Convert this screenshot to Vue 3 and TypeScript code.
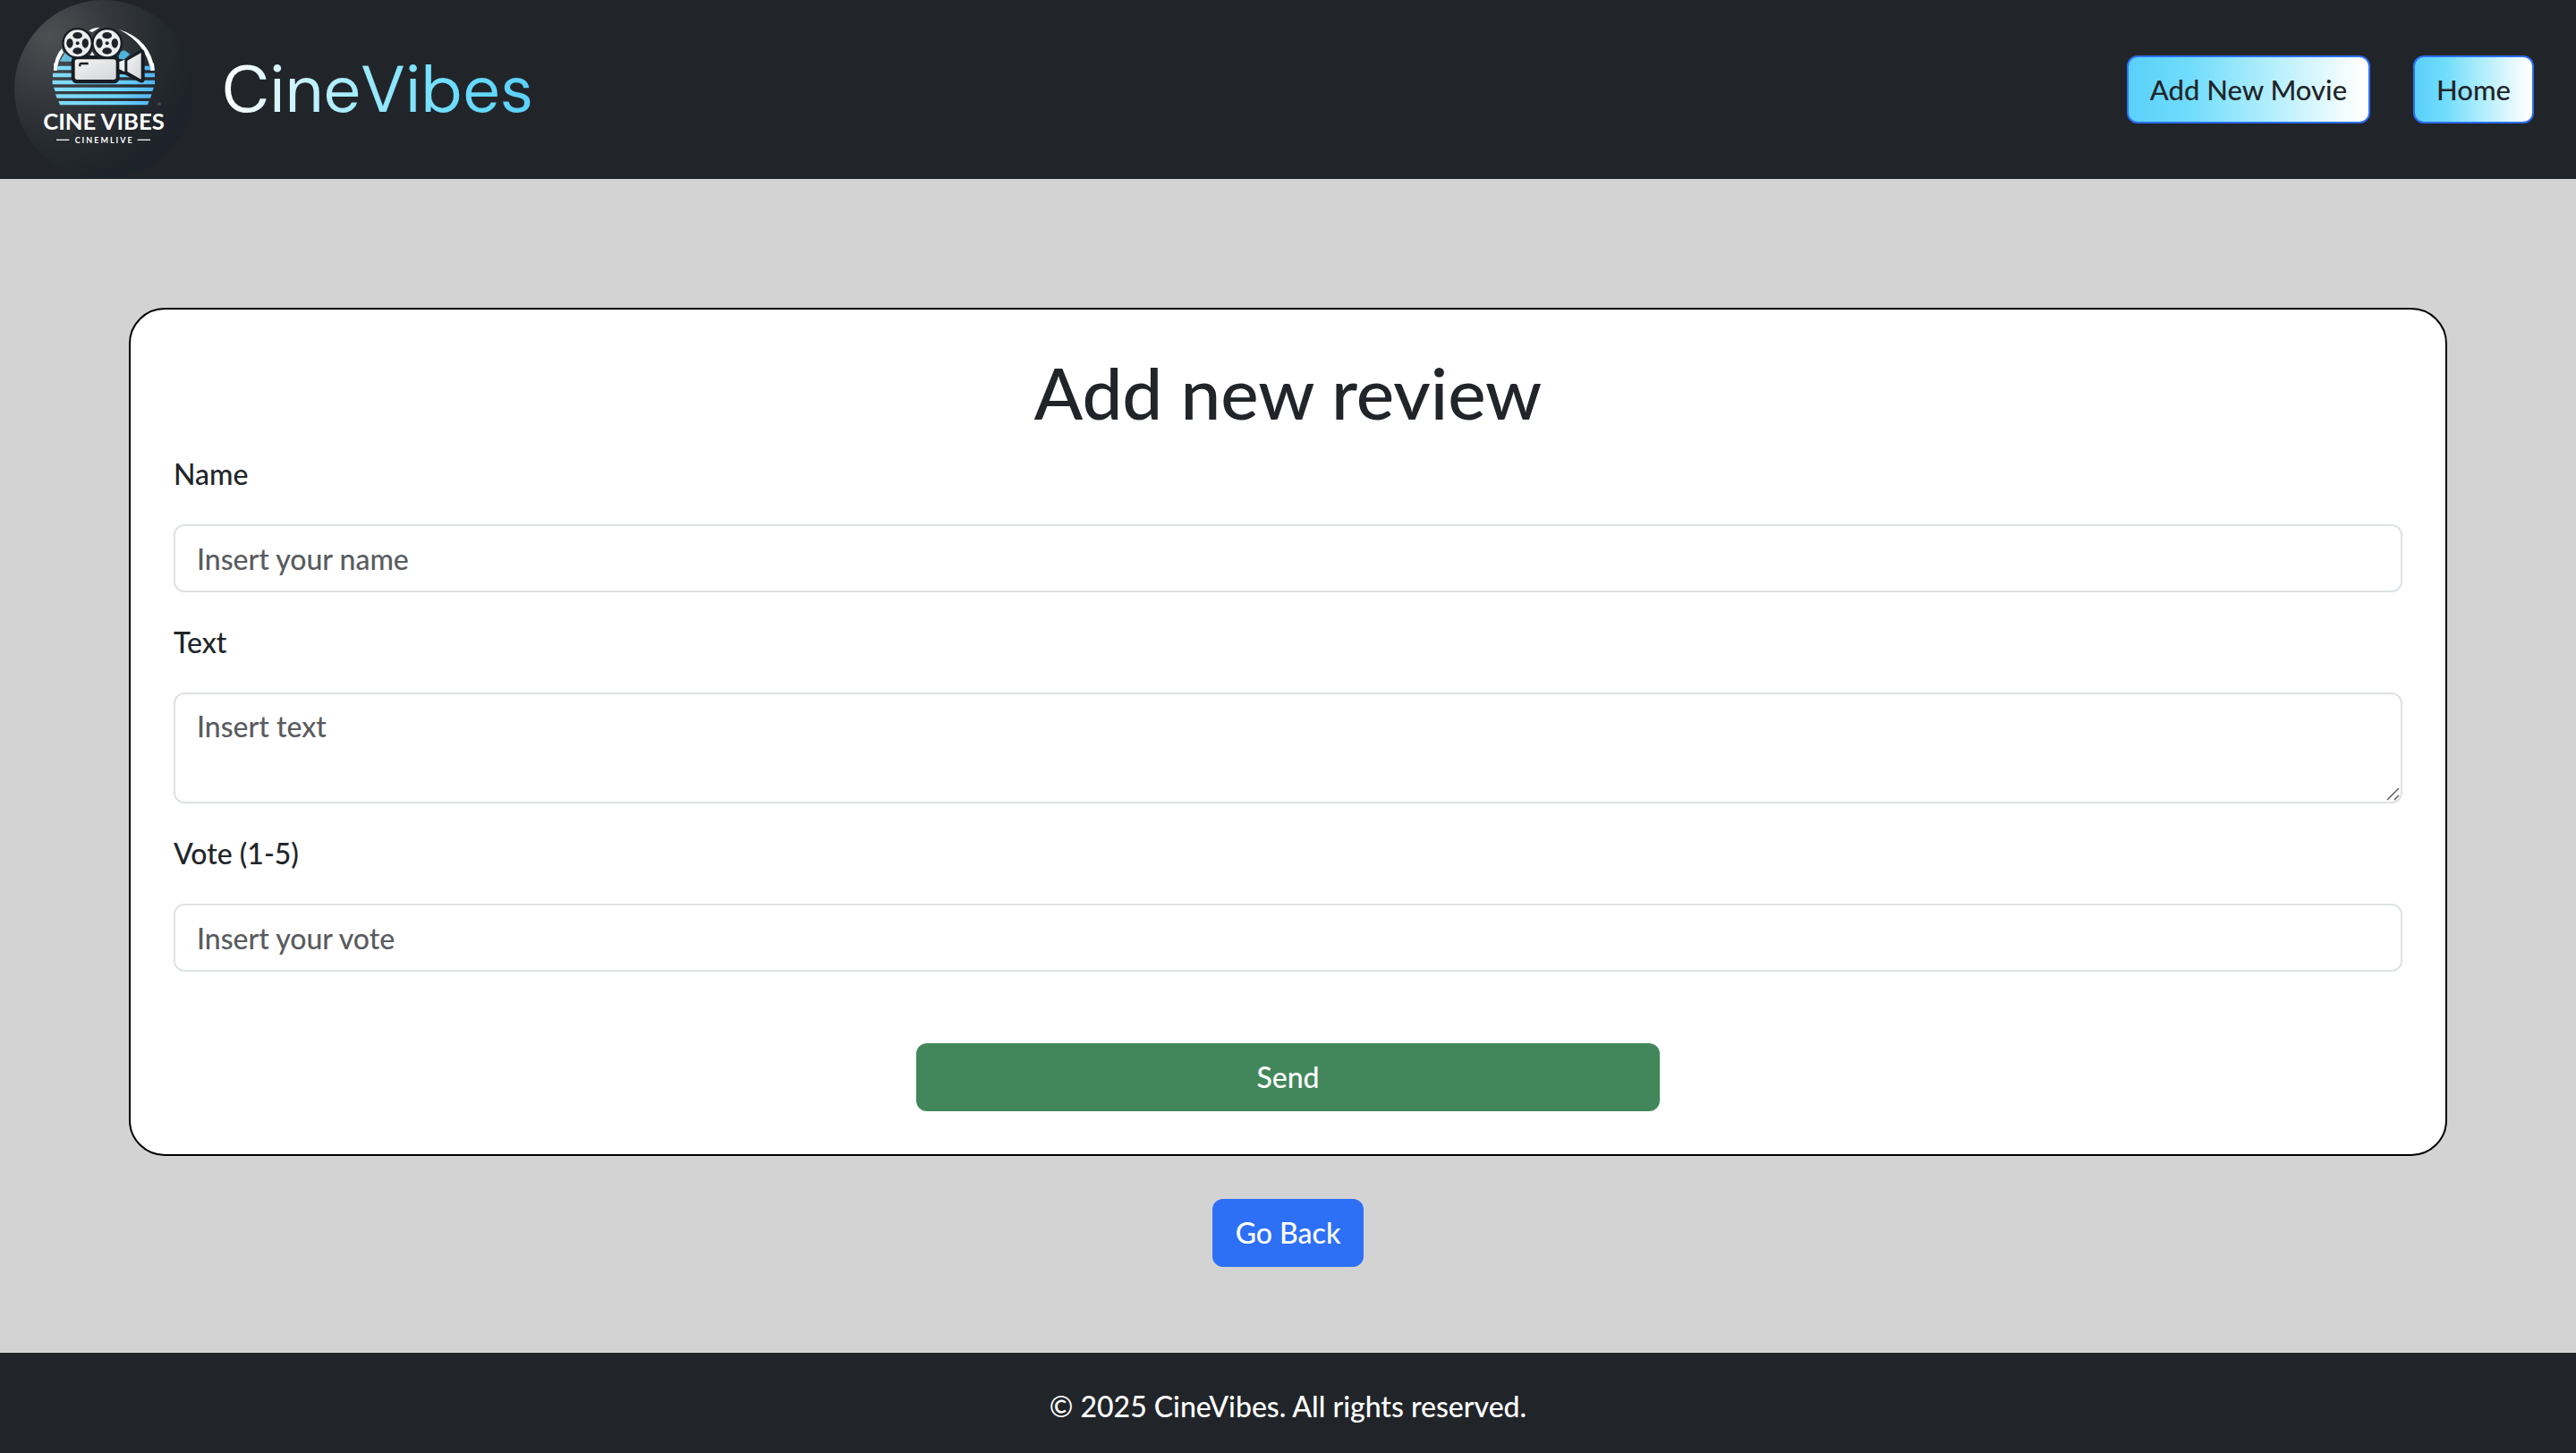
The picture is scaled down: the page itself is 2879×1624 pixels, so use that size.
<script setup lang="ts">
import { ref } from 'vue'

const name = ref('')
const text = ref('')
const vote = ref('')

const stripes = [
  { y: 221, x1: 180, x2: 517, h: 14 },
  { y: 245, x1: 177, x2: 519, h: 14 },
  { y: 269, x1: 176, x2: 519, h: 14 },
  { y: 293, x1: 180, x2: 516, h: 13 },
  { y: 316, x1: 186, x2: 509, h: 13 },
  { y: 339, x1: 196, x2: 500, h: 13 },
]
const reels = [
  { x: 260, y: 145 },
  { x: 359, y: 145 },
]
const angles = [0, 90, 180, 270]
</script>

<template>
  <div class="page">
    <header class="header">
      <a class="brand" href="#">
        <svg class="logo" viewBox="48 0 600 600" role="img" aria-label="Cine Vibes">
          <defs>
            <radialGradient id="disc" cx="0.2" cy="0.2" r="0.85">
              <stop offset="0" stop-color="#4c5053" />
              <stop offset="0.4" stop-color="#35393d" />
              <stop offset="0.75" stop-color="#24292e" />
              <stop offset="1" stop-color="#1d232a" />
            </radialGradient>
            <linearGradient id="sea" x1="176" x2="519" y1="0" y2="0" gradientUnits="userSpaceOnUse">
              <stop offset="0" stop-color="#83dcf6" />
              <stop offset="0.6" stop-color="#6cd5fa" />
              <stop offset="1" stop-color="#52b5f4" />
            </linearGradient>
            <linearGradient id="metal" x1="0" x2="1" y1="0" y2="1">
              <stop offset="0" stop-color="#f4f4f4" />
              <stop offset="1" stop-color="#d3d5d8" />
            </linearGradient>
          </defs>
          <circle cx="348" cy="300" r="300" fill="url(#disc)" />
          <path d="M398 98 Q506 132 518 236 L505 236 Q490 145 398 98Z" fill="#fff" />
          <path d="M180 236 Q182 190 207 163 L213 176 Q194 200 191 236Z" fill="#fff" />
          <path d="M298 103 Q314 91 334 92 L309 108Z" fill="#fff" />
          <path d="M200 206 L218 176 L242 194 L242 206Z" fill="#67bcd9" />
          <path d="M398 197 Q400 166 420 170 L436 182 L410 204Z" fill="#4fb4dc" />
          <path
            v-for="s in stripes"
            :key="s.y"
            :d="`M${s.x1} ${s.y}H${s.x2}L${s.x2 - (s.y > 280 ? 5 : 0)} ${s.y + s.h}H${s.x1 + (s.y > 280 ? 5 : 0)}Z`"
            fill="url(#sea)"
          />
          <path d="M180 212 L191 212 L191 236 L180 236Z M505 212 L516 212 L518 236 L505 236Z" fill="#fff" />
          <rect x="239" y="186" width="162" height="94" rx="20" fill="#171d23" />
          <path d="M392 196 L418 200 L472 166 Q484 164 485 178 L485 268 Q483 280 470 277 L418 250 L392 248Z" fill="#171d23" />
          <rect x="251" y="199" width="138" height="68" rx="8" fill="url(#metal)" />
          <path d="M268 223 V216 Q268 213 272 213 H296" fill="none" stroke="#171d23" stroke-width="7" />
          <path d="M400 207 L418 200 V241 L400 232Z" fill="#eef0f2" />
          <path d="M427 203 L473 177 V266 L427 240Z" fill="url(#metal)" />
          <path d="M302 186 L309 173 L317 186Z" fill="#fff" />
          <g v-for="r in reels" :key="r.x" :transform="`translate(${r.x} ${r.y})`">
            <circle r="52" fill="#171d23" />
            <circle r="45" fill="#eceded" />
            <ellipse
              v-for="a in angles"
              :key="a"
              cy="-26"
              rx="16"
              ry="11"
              :transform="`rotate(${a})`"
              fill="#1d2329"
            />
            <circle r="6" fill="#1d2329" />
          </g>
          <circle cx="534" cy="349" r="6" fill="#3f464d" />
          <text class="logo-title" x="348" y="436" text-anchor="middle">CINE VIBES</text>
          <text class="logo-sub" x="350" y="479" text-anchor="middle">CINEMLIVE</text>
          <path d="M189 469H232M461 469H504" stroke="#fff" stroke-width="4" />
        </svg>
        <span class="brand-name">CineVibes</span>
      </a>
      <nav class="nav">
        <a class="btn nav-btn" href="#">Add New Movie</a>
        <a class="btn nav-btn" href="#">Home</a>
      </nav>
    </header>

    <main class="main">
      <section class="card">
        <h1 class="title">Add new review</h1>
        <form @submit.prevent>
          <div class="field">
            <label for="name">Name</label>
            <input id="name" v-model="name" type="text" placeholder="Insert your name" />
          </div>
          <div class="field">
            <label for="text">Text</label>
            <textarea id="text" v-model="text" placeholder="Insert text"></textarea>
          </div>
          <div class="field">
            <label for="vote">Vote (1-5)</label>
            <input id="vote" v-model="vote" type="text" inputmode="numeric" placeholder="Insert your vote" />
          </div>
          <button class="btn send" type="submit">Send</button>
        </form>
      </section>
      <a class="btn back" href="#">Go Back</a>
    </main>

    <footer class="footer">© 2025 CineVibes. All rights reserved.</footer>
  </div>
</template>

<style>
body {
  margin: 0;
  background: #d3d3d3;
}
</style>

<style scoped>
* {
  box-sizing: border-box;
}
.page {
  display: flex;
  flex-direction: column;
  min-height: 100vh;
  color: #212529;
  background: #d3d3d3;
  font-family: 'Trebuchet MS', Lato, sans-serif;
  font-size: 32px;
  font-weight: 500;
  line-height: 48px;
}
.header {
  display: flex;
  align-items: center;
  justify-content: space-between;
  padding: 0 47px 0 16px;
  background: #212529;
}
.brand {
  display: flex;
  align-items: center;
  gap: 32px;
  text-decoration: none;
}
.logo {
  display: block;
  width: 200px;
  height: 200px;
}
.logo-title {
  fill: #fff;
  font-family: Lato, sans-serif;
  font-size: 77px;
  font-weight: 700;
}
.logo-sub {
  fill: #fff;
  font-family: Lato, sans-serif;
  font-size: 27px;
  font-weight: 700;
  letter-spacing: 6px;
}
.brand-name {
  font-family: 'DM Sans', Inter, sans-serif;
  font-size: 74px;
  font-weight: 400;
  line-height: 96px;
  color: transparent;
  background: linear-gradient(to right, #fff, #9eeaff 45%, #6adcff 75%, #5bd0fa);
  background-clip: text;
}
.nav {
  display: flex;
  gap: 48px;
}
.btn {
  display: block;
  padding: 12px 24px;
  border: 2px solid transparent;
  border-radius: 12px;
  font: inherit;
  text-align: center;
  text-decoration: none;
  cursor: pointer;
}
.nav-btn {
  color: #212529;
  border-color: #2d70f5;
  background: linear-gradient(to right, #5bd0fa, #6fdcfc 25%, #b5effd 60%, #fff 97%);
  font-size: 31px;
}
.main {
  display: flex;
  flex: 1;
  flex-direction: column;
  align-items: center;
  gap: 48px;
  padding: 144px 5% 96px;
}
.card {
  width: 100%;
  padding: 48px;
  border: 2px solid #000;
  border-radius: 40px;
  background: #fff;
}
.title {
  margin: 0 0 24px;
  font-size: 80px;
  font-weight: 500;
  line-height: 88px;
  text-align: center;
}
.field {
  display: flex;
  flex-direction: column;
  gap: 32px;
  margin-bottom: 32px;
}
.field label {
  align-self: flex-start;
}
.field input,
.field textarea {
  display: block;
  width: 100%;
  margin: 0;
  padding: 12px 24px;
  border: 2px solid #dee2e6;
  border-radius: 12px;
  color: #212529;
  background: #fff;
  font: inherit;
}
.field input {
  height: 76px;
}
.field textarea {
  height: 124px;
  resize: vertical;
}
.field textarea::-webkit-resizer {
  background: url("data:image/svg+xml,%3Csvg xmlns='http://www.w3.org/2000/svg' viewBox='0 0 15 15'%3E%3Cpath d='M0 13L13 0M8 13L13 8' stroke='%23555' stroke-width='1.4'/%3E%3C/svg%3E")
    no-repeat center / 15px 15px;
}
.field ::placeholder {
  color: #595c5f;
  opacity: 1;
}
.send {
  width: 33.33%;
  margin: 80px auto 0;
  color: #fff;
  background: #42875b;
}
.back {
  color: #fff;
  background: #2d70f5;
}
.footer {
  padding: 36px 32px 28px;
  color: #fff;
  background: #212529;
  text-align: center;
}
</style>
